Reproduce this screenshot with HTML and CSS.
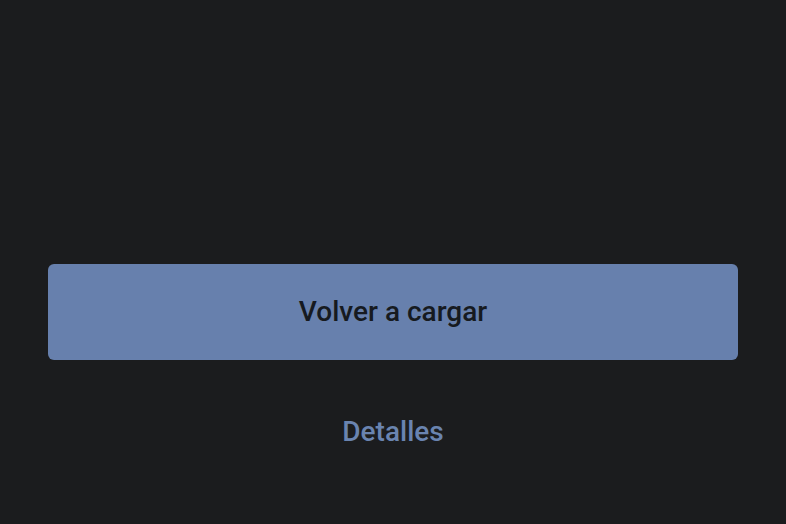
FILE: index.html
```html
<!DOCTYPE html>
<html lang="es">
<head>
<meta charset="utf-8">
<link rel="stylesheet" href="styles.css">
</head>
<body>
<main class="page">
  <button class="reload">Volver a cargar</button>
  <a class="details" href="#">Detalles</a>
</main>
</body>
</html>
```
FILE: styles.css
```css
html, body {
  margin: 0;
  height: 100%;
  background: #1b1c1e;
}
.page {
  box-sizing: border-box;
  height: 100%;
  padding: 264px 48px 0;
  display: flex;
  flex-direction: column;
  align-items: stretch;
  font-family: Roboto, "Liberation Sans", sans-serif;
}
.reload {
  height: 96px;
  border: none;
  border-radius: 6px;
  background: #6780ad;
  color: #161a20;
  font-family: inherit;
  font-size: 28px;
  font-weight: 500;
  padding: 0 0 2px;
}
.details {
  align-self: center;
  margin-top: 56px;
  color: #6a84b0;
  text-decoration: none;
  font-size: 28px;
  font-weight: 500;
  line-height: 32px;
}
```
